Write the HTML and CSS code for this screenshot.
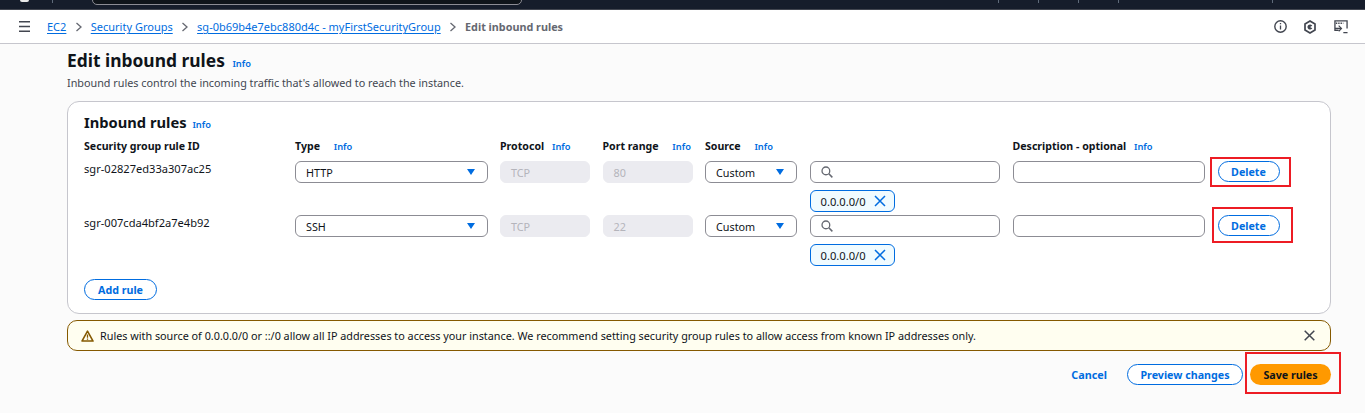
FILE: index.html
```html
<!DOCTYPE html>
<html lang="en">
<head>
  <meta charset="UTF-8">
  <title>Edit inbound rules</title>
  <link rel="stylesheet" href="styles.css">
</head>
<body>
  <header class="topbar">
    <span class="topbar-logo"></span>
    <span class="topbar-tick tick-logo"></span>
    <span class="topbar-search"></span>
    <span class="topbar-tick tick-a"></span>
    <span class="topbar-tick tick-b"></span>
    <span class="topbar-tick tick-c"></span>
    <span class="topbar-tick tick-d"></span>
    <span class="topbar-tick tick-e"></span>
  </header>

  <nav class="crumbs">
    <svg class="menu-icon" width="11" height="11" viewBox="0 0 11 11"><path d="M0 .75h11M0 5.500h11M0 10.250h11" stroke="#424650" stroke-width="1.500"/></svg>
    <a class="crumb-link">EC2</a>
    <svg class="crumb-sep" width="8" height="10" viewBox="0 0 8 10"><path d="M1.5 1l4.500 4-4.500 4" fill="none" stroke="#656871" stroke-width="1.300"/></svg>
    <a class="crumb-link">Security Groups</a>
    <svg class="crumb-sep" width="8" height="10" viewBox="0 0 8 10"><path d="M1.5 1l4.500 4-4.500 4" fill="none" stroke="#656871" stroke-width="1.300"/></svg>
    <a class="crumb-link">sg-0b69b4e7ebc880d4c - myFirstSecurityGroup</a>
    <svg class="crumb-sep" width="8" height="10" viewBox="0 0 8 10"><path d="M1.5 1l4.500 4-4.500 4" fill="none" stroke="#656871" stroke-width="1.300"/></svg>
    <span class="crumb-current">Edit inbound rules</span>
    <div class="crumb-tools">
      <svg width="13" height="13" viewBox="0 0 13 13"><circle cx="6.500" cy="6.500" r="5.700" fill="none" stroke="#424650" stroke-width="1.400"/><path d="M6.500 5.500v4M6.500 3v1.300" stroke="#424650" stroke-width="1.300"/></svg>
      <svg width="12" height="14" viewBox="0 0 12 14"><path d="M6 1l5 3v6l-5 3-5-3V4z" fill="none" stroke="#424650" stroke-width="1.700"/><path d="M8.300 5.700A2.600 2.600 0 1 0 8.300 8.300L6 7z" fill="#424650"/></svg>
      <svg class="console-icon" width="14" height="14" viewBox="0 0 15 15"><path d="M5 11H1V1h13v8" fill="none" stroke="#424650" stroke-width="1.400"/><path d="M2 3.500h8" stroke="#424650" stroke-width="1.500" stroke-dasharray="1.500 1"/><path d="M5 6l3 3-3 3M1 9h6M10 13.500h4.500" fill="none" stroke="#424650" stroke-width="1.300"/></svg>
    </div>
  </nav>

  <main class="page">
    <h1 class="page-title">Edit inbound rules <a class="info">Info</a></h1>
    <p class="page-desc">Inbound rules control the incoming traffic that's allowed to reach the instance.</p>

    <section class="card">
      <h2 class="card-title">Inbound rules <a class="info">Info</a></h2>

      <div class="rules-grid rules-head">
        <div class="col-label">Security group rule ID</div>
        <div class="col-label">Type <a class="info info-gap">Info</a></div>
        <div class="col-label">Protocol <a class="info">Info</a></div>
        <div class="col-label">Port range <a class="info info-gap">Info</a></div>
        <div class="col-label">Source <a class="info info-gap">Info</a></div>
        <div></div>
        <div class="col-label">Description - optional <a class="info">Info</a></div>
        <div></div>
      </div>

      <div class="rules-grid rule-row">
        <div class="rule-id">sgr-02827ed33a307ac25</div>
        <div class="field field-select">HTTP <svg width="8" height="6" viewBox="0 0 8 6"><path d="M0 0h8L4 6z" fill="#006ce0"/></svg></div>
        <div class="field field-off">TCP</div>
        <div class="field field-off">80</div>
        <div class="field field-select">Custom <svg width="8" height="6" viewBox="0 0 8 6"><path d="M0 0h8L4 6z" fill="#006ce0"/></svg></div>
        <div class="source-col">
          <div class="field search-field"><svg width="12" height="12" viewBox="0 0 13 13"><circle cx="5.300" cy="5.300" r="4.200" fill="none" stroke="#656871" stroke-width="1.400"/><path d="M8.500 8.500l3.800 3.800" stroke="#656871" stroke-width="1.600"/></svg></div>
          <div class="token">0.0.0.0/0 <svg width="12" height="12" viewBox="0 0 12 12"><path d="M1 1l10 10M11 1L1 11" stroke="#006ce0" stroke-width="1.500"/></svg></div>
        </div>
        <div class="field"></div>
        <div class="delete-cell">
          <button class="btn btn-line btn-delete">Delete</button>
          <span class="mark mark-first"></span>
        </div>
      </div>

      <div class="rules-grid rule-row">
        <div class="rule-id">sgr-007cda4bf2a7e4b92</div>
        <div class="field field-select">SSH <svg width="8" height="6" viewBox="0 0 8 6"><path d="M0 0h8L4 6z" fill="#006ce0"/></svg></div>
        <div class="field field-off">TCP</div>
        <div class="field field-off">22</div>
        <div class="field field-select">Custom <svg width="8" height="6" viewBox="0 0 8 6"><path d="M0 0h8L4 6z" fill="#006ce0"/></svg></div>
        <div class="source-col">
          <div class="field search-field"><svg width="12" height="12" viewBox="0 0 13 13"><circle cx="5.300" cy="5.300" r="4.200" fill="none" stroke="#656871" stroke-width="1.400"/><path d="M8.500 8.500l3.800 3.800" stroke="#656871" stroke-width="1.600"/></svg></div>
          <div class="token">0.0.0.0/0 <svg width="12" height="12" viewBox="0 0 12 12"><path d="M1 1l10 10M11 1L1 11" stroke="#006ce0" stroke-width="1.500"/></svg></div>
        </div>
        <div class="field"></div>
        <div class="delete-cell">
          <button class="btn btn-line btn-delete">Delete</button>
          <span class="mark mark-second"></span>
        </div>
      </div>

      <button class="btn btn-line btn-add">Add rule</button>
    </section>

    <div class="alert">
      <svg width="13" height="12" viewBox="0 0 14 13"><path d="M7 1.200L13 12H1z" fill="none" stroke="#855900" stroke-width="1.700" stroke-linejoin="round"/><path d="M7 4.800v3.600M7 9.200v1.300" stroke="#855900" stroke-width="1.400"/></svg>
      <span class="alert-text">Rules with source of 0.0.0.0/0 or ::/0 allow all IP addresses to access your instance. We recommend setting security group rules to allow access from known IP addresses only.</span>
      <svg class="alert-close" width="11" height="11" viewBox="0 0 11 11"><path d="M.7.7l9.600 9.600M10.300.7L.7 10.300" stroke="#424650" stroke-width="1.500"/></svg>
    </div>

    <div class="actions">
      <a class="cancel">Cancel</a>
      <button class="btn btn-line btn-preview">Preview changes</button>
      <div class="save-cell">
        <button class="btn btn-save">Save rules</button>
        <span class="mark mark-save"></span>
      </div>
    </div>
  </main>
</body>
</html>
```

FILE: styles.css
```css
* {
  box-sizing: border-box;
}
body {
  margin: 0;
  height: 413px;
  overflow: hidden;
  background: #fbfbfb;
  color: #0f141a;
  font-family: "Noto Sans", Arial, sans-serif;
  font-size: 10.800px;
}
a {
  cursor: pointer;
}

/* top bar */
.topbar {
  position: relative;
  height: 10px;
  background: #161d2b;
  border-bottom: 1px solid #424650;
}
.topbar-logo {
  position: absolute;
  left: 20px;
  top: 0;
  width: 9px;
  height: 2px;
  background: #e8e8e8;
  border-radius: 0 0 4px 4px;
}
.topbar-search {
  position: absolute;
  left: 92px;
  top: -8px;
  width: 430px;
  height: 13px;
  background: #0f141a;
  border: 1px solid #8c8c94;
  border-radius: 5px;
}
.topbar-tick {
  position: absolute;
  top: 0;
  width: 1px;
  height: 3px;
  background: #5f6b7a;
}
.tick-logo { left: 52px; }
.tick-a { left: 998px; }
.tick-b { left: 1038px; }
.tick-c { left: 1078px; }
.tick-d { left: 1118px; }
.tick-e { left: 1272px; }

/* breadcrumbs */
.crumbs {
  display: flex;
  align-items: center;
  height: 34px;
  padding: 0 17px 0 19px;
  background: #fff;
  border-bottom: 1px solid #c6c6cd;
}
.menu-icon {
  margin-right: 17px;
}
.crumb-link {
  color: #006ce0;
  font-size: 11px;
  text-decoration: underline;
  text-underline-offset: 2px;
}
.crumb-sep {
  margin: 0 8.200px;
}
.crumb-current {
  color: #656871;
  font-weight: 700;
}
.crumb-tools {
  margin-left: auto;
  display: flex;
  align-items: center;
  gap: 17px;
}
.console-icon {
  margin-left: 1px;
}

/* page */
.page {
  padding: 0 34px 0 67px;
}
.page-title {
  margin: 5px 0 0;
  font-size: 17.400px;
  line-height: 22px;
  font-weight: 700;
}
.page-desc {
  margin: 0;
  color: #424650;
  line-height: 16px;
}
.info {
  color: #006ce0;
  font-size: 9.300px;
  font-weight: 600;
  margin-left: 3px;
}
.card-title .info {
  margin-left: 2px;
}
.col-label .info {
  margin-left: 5px;
}
.col-label .info-gap {
  margin-left: 11px;
}

.card {
  margin-top: 10px;
  height: 213px;
  padding: 11px 16px;
  background: #fff;
  border: 1px solid #c6c6cd;
  border-radius: 12px;
}
.card-title {
  margin: 0;
  font-size: 14.700px;
  line-height: 19px;
  font-weight: 700;
}
.rules-grid {
  display: grid;
  grid-template-columns: 198.500px 192.500px 90px 90px 92px 190.500px 192.500px 62px;
  column-gap: 12.500px;
}
.rules-head {
  margin-top: 4px;
  height: 23px;
}
.col-label {
  font-size: 10.600px;
  font-weight: 700;
  line-height: 16px;
  white-space: nowrap;
}
.rule-row {
  height: 54px;
  align-items: start;
}
.rule-id {
  font-size: 11.100px;
  line-height: 16px;
}
.field {
  display: flex;
  align-items: center;
  justify-content: space-between;
  height: 22px;
  padding: 0 10px;
  background: #fff;
  border: 1px solid #8c8c94;
  border-radius: 6px;
}
.field-select {
  padding-right: 12px;
}
.field-off {
  background: #ebebf0;
  border-color: #ebebf0;
  color: #b4b4bb;
}
.search-field {
  justify-content: flex-start;
}
.token {
  display: inline-flex;
  align-items: center;
  gap: 8px;
  height: 22px;
  margin-top: 7px;
  padding: 0 8px 0 10px;
  font-size: 11.200px;
  background: #f0fbff;
  border: 1px solid #006ce0;
  border-radius: 6px;
}
.btn {
  display: block;
  height: 21px;
  padding: 0;
  font-family: inherit;
  font-size: 10.700px;
  font-weight: 700;
  border-radius: 11px;
  cursor: pointer;
}
.btn-line {
  background: #fff;
  border: 1px solid #006ce0;
  color: #006ce0;
}
.delete-cell,
.save-cell {
  position: relative;
}
.btn-delete {
  width: 62px;
}
.btn-add {
  width: 73px;
  margin-top: 10px;
}

/* red annotation boxes */
.mark {
  position: absolute;
  border: 2px solid #ed1c24;
}
.mark-first {
  left: -8px;
  top: -4px;
  width: 81px;
  height: 30px;
}
.mark-second {
  left: -6px;
  top: -8px;
  width: 81px;
  height: 36px;
}
.mark-save {
  left: -5px;
  top: -12px;
  width: 96px;
  height: 42px;
}

.alert {
  display: flex;
  align-items: center;
  height: 31px;
  margin-top: 6px;
  padding: 0 13px;
  background: #fffef0;
  border: 1px solid #855900;
  border-radius: 10px;
}
.alert-text {
  margin-left: 6px;
}
.alert-close {
  margin-left: auto;
  margin-right: 2px;
}

.actions {
  display: flex;
  align-items: center;
  justify-content: flex-end;
  margin-top: 13px;
}
.cancel {
  color: #006ce0;
  font-weight: 700;
  margin-right: 20px;
}
.btn-preview {
  width: 116px;
  margin-right: 7px;
}
.btn-save {
  width: 81px;
  background: #ff9900;
  border: none;
  color: #0f141a;
}
```
